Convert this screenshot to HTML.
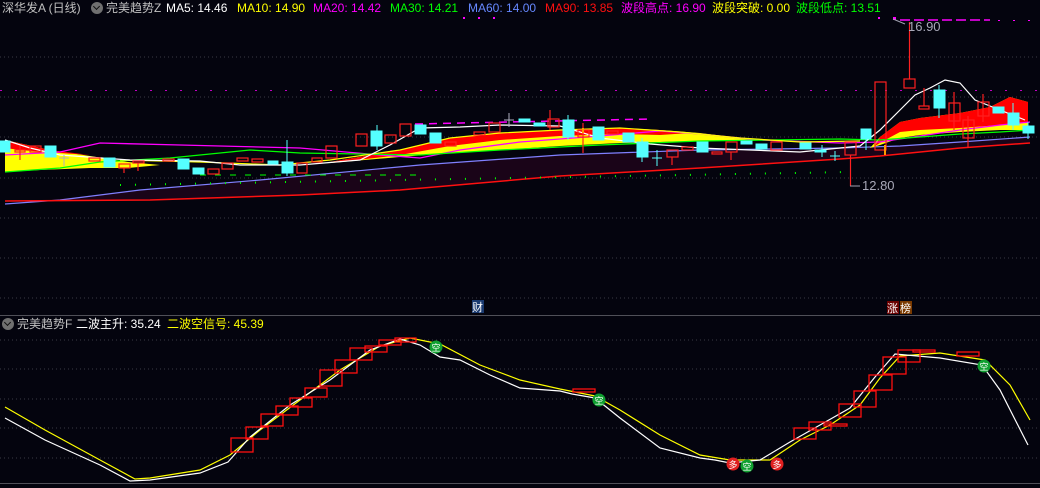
<!DOCTYPE html>
<html><head><meta charset="utf-8"><style>
html,body{margin:0;padding:0;background:#04040e;}
body{width:1040px;height:488px;overflow:hidden;position:relative;font-family:"Liberation Sans","Noto Sans CJK SC",sans-serif;}
.t{position:absolute;font-size:12px;white-space:nowrap;line-height:15px;}
.ic{position:absolute;width:12px;height:12px;border-radius:50%;background:#707070;}
.ic:after{content:"";position:absolute;left:3px;top:2px;width:4px;height:4px;border-right:1.5px solid #111;border-bottom:1.5px solid #111;transform:rotate(45deg);}
</style></head><body>
<svg width="1040" height="488" style="position:absolute;left:0;top:0" xmlns="http://www.w3.org/2000/svg">
<g stroke="#3a3a44" stroke-dasharray="1,3" stroke-width="1">
<line x1="0" y1="57" x2="1040" y2="57"/><line x1="0" y1="97" x2="1040" y2="97"/><line x1="0" y1="137" x2="1040" y2="137"/><line x1="0" y1="178" x2="1040" y2="178"/><line x1="0" y1="218" x2="1040" y2="218"/><line x1="0" y1="258" x2="1040" y2="258"/><line x1="0" y1="298" x2="1040" y2="298"/>
<line x1="0" y1="340" x2="1040" y2="340"/><line x1="0" y1="369" x2="1040" y2="369"/><line x1="0" y1="399" x2="1040" y2="399"/><line x1="0" y1="428" x2="1040" y2="428"/><line x1="0" y1="458" x2="1040" y2="458"/>
</g>
<line x1="0" y1="315.5" x2="1040" y2="315.5" stroke="#505058"/>
<line x1="0" y1="483.5" x2="1040" y2="483.5" stroke="#505058"/>
<line x1="0" y1="90.5" x2="1040" y2="90.5" stroke="#c000c0" stroke-dasharray="2,13"/>
<polygon fill="#1a0418" points="25,203 140,190 260,180 420,165 560,155 700,150 840,148 900,146 960,142 1030,137 1030,143 960,148 880,156 840,159 700,168 560,176 400,190 300,195 150,200 25,201"/>
<polyline fill="none" stroke="#8080ff" stroke-width="1.2" points="5,204 60,200 140,190 260,180 420,165 560,155 700,150 840,148 900,146 960,142 1030,137"/>
<polyline fill="none" stroke="#ff1010" stroke-width="1.5" points="5,201 150,200 300,195 400,190 560,176 700,168 840,159 880,156 960,148 1030,143"/>
<polygon fill="#ffff00" points="5,140 50,150 90,156 128,162 160,165 128,168 90,168 40,170 5,172"/>
<polygon fill="#ff0000" points="5,140 50,150 90,155 60,153 20,150 5,148"/>
<polygon fill="#ffff00" points="330,162 400,150 450,138 500,133 560,130 620,128 660,130 700,133 740,138 780,140 740,141 700,141 660,142 620,143 560,146 500,150 450,153 400,157 330,163"/>
<polygon fill="#ff0000" points="330,162 400,150 450,138 500,133 560,130 620,128 660,130 690,133 660,135 620,134 560,136 500,140 450,146 400,155 340,162"/>
<polygon fill="#ffff00" points="870,148 880,137 900,122 920,118 960,113 990,107 1010,97 1028,102 1028,130 1000,130 960,132 920,135 900,138 880,145"/>
<polygon fill="#ff0000" points="875,146 880,137 900,122 920,118 960,113 990,107 1010,97 1028,102 1028,122 1000,125 960,128 920,130 900,132 885,140"/>
<polyline fill="none" stroke="#ff00ff" stroke-width="1.3" points="5,155 60,152 100,143 180,145 300,148 380,155 420,158 460,150 520,142 600,136 660,131 700,134 760,140 840,143 880,142 920,136 960,130 1000,125 1030,122"/>
<polyline fill="none" stroke="#00ff00" stroke-width="1.3" points="5,172 60,168 100,162 170,158 250,150 300,153 420,155 500,150 600,145 700,141 840,139 880,140 920,137 960,134 1000,132 1030,130"/>
<polyline fill="none" stroke="#ffff00" stroke-width="1.2" points="120,160 200,162 280,165 330,160 400,150 450,138 500,133 560,130 620,128 680,132 740,138 800,142 860,141"/>
<polyline fill="none" stroke="#ffffff" stroke-width="1.2" points="5,140 30,148 60,155 130,160 200,161 240,165 300,165 360,160 390,145 420,128 460,127 500,125 560,126 600,138 650,144 700,148 800,152 860,146 880,130 900,110 915,95 930,88 945,80 960,83 975,100 1000,110 1025,120"/>
<polyline fill="none" stroke="#00ff00" stroke-dasharray="6,9" stroke-width="1" points="200,175 420,175"/>
<polyline fill="none" stroke="#00ff00" stroke-dasharray="1,14" stroke-width="2" points="120,185 850,172"/>
<line x1="415" y1="124" x2="650" y2="119" stroke="#ff00ff" stroke-dasharray="8,6" stroke-width="1.5"/>
<line x1="900" y1="20" x2="990" y2="20" stroke="#ff00ff" stroke-dasharray="10,4" stroke-width="1.5"/>
<g fill="#ff00ff"><rect x="463" y="17" width="2" height="2"/><rect x="478" y="17" width="2" height="2"/><rect x="493" y="17" width="2" height="2"/><rect x="878" y="17" width="2" height="2"/><rect x="893" y="17" width="3" height="3"/><rect x="998" y="20" width="2" height="1"/><rect x="1013" y="20" width="2" height="1"/><rect x="1028" y="20" width="2" height="1"/></g>
<g fill="#55ffff" stroke="#55ffff">
<rect x="0" y="141" width="10" height="11"/><rect x="45" y="146" width="11" height="11"/><rect x="104" y="158" width="11" height="9"/><rect x="178" y="159" width="11" height="10"/><rect x="193" y="168" width="11" height="6"/><rect x="268" y="161" width="10" height="3"/><rect x="282" y="162" width="11" height="11"/><rect x="371" y="131" width="11" height="15"/><rect x="415" y="125" width="11" height="9"/><rect x="430" y="133" width="11" height="10"/><rect x="519" y="119" width="11" height="3"/><rect x="534" y="123" width="11" height="3"/><rect x="563" y="120" width="11" height="17"/><rect x="593" y="127" width="11" height="13"/><rect x="623" y="133" width="11" height="9"/><rect x="637" y="142" width="11" height="15"/><rect x="697" y="142" width="11" height="10"/><rect x="741" y="141" width="11" height="3"/><rect x="756" y="144" width="11" height="5"/><rect x="800" y="143" width="11" height="6"/><rect x="815" y="150" width="11" height="2"/><rect x="861" y="129" width="10" height="10"/><rect x="934" y="90" width="11" height="18"/><rect x="993" y="107" width="11" height="6"/><rect x="1008" y="113" width="11" height="12"/><rect x="1023" y="126" width="11" height="7"/>
<line x1="287" y1="140" x2="287" y2="176"/><line x1="377" y1="125" x2="377" y2="150"/><line x1="568" y1="115" x2="568" y2="140"/><line x1="642" y1="138" x2="642" y2="162"/><line x1="866" y1="139" x2="866" y2="150"/><line x1="939" y1="85" x2="939" y2="118"/><line x1="1013" y1="103" x2="1013" y2="130"/><line x1="1028" y1="122" x2="1028" y2="139"/>
<line x1="657" y1="150" x2="657" y2="166"/><line x1="652" y1="158" x2="662" y2="158"/><line x1="822" y1="145" x2="822" y2="157"/><line x1="835" y1="151" x2="835" y2="161"/><line x1="830" y1="156" x2="840" y2="156"/>
</g>
<g fill="none" stroke="#b0b0c0"><line x1="64" y1="155" x2="64" y2="166"/><line x1="59" y1="158" x2="69" y2="158"/><line x1="509" y1="113" x2="509" y2="127"/><line x1="504" y1="120" x2="514" y2="120"/></g>
<g fill="none" stroke="#ff2020" stroke-width="1.2">
<rect x="15" y="150" width="10" height="2"/><rect x="30" y="146" width="11" height="6"/><rect x="89" y="158" width="11" height="3"/><rect x="119" y="164" width="11" height="4"/><rect x="133" y="161" width="11" height="2"/><rect x="163" y="159" width="11" height="2"/><rect x="208" y="169" width="11" height="5"/><rect x="222" y="163" width="11" height="6"/><rect x="237" y="158" width="11" height="3"/><rect x="252" y="159" width="11" height="3"/><rect x="297" y="163" width="10" height="10"/><rect x="312" y="158" width="10" height="4"/><rect x="326" y="146" width="11" height="12"/><rect x="356" y="134" width="11" height="12"/><rect x="385" y="135" width="11" height="8"/><rect x="400" y="124" width="11" height="12"/><rect x="445" y="142" width="11" height="4"/><rect x="474" y="132" width="11" height="3"/><rect x="489" y="123" width="11" height="9"/><rect x="548" y="119" width="11" height="8"/><rect x="578" y="130" width="11" height="7"/><rect x="607" y="131" width="11" height="3"/><rect x="667" y="150" width="11" height="7"/><rect x="682" y="147" width="11" height="3"/><rect x="712" y="152" width="10" height="2"/><rect x="726" y="142" width="11" height="10"/><rect x="771" y="142" width="11" height="8"/>
<rect x="845" y="142" width="11" height="13"/><rect x="875" y="82" width="11" height="68"/><rect x="904" y="79" width="11" height="9"/><rect x="919" y="106" width="10" height="3"/><rect x="949" y="103" width="11" height="18"/><rect x="963" y="120" width="11" height="18"/><rect x="978" y="102" width="11" height="14"/>
<line x1="20" y1="146" x2="20" y2="160"/><line x1="124" y1="168" x2="124" y2="173"/><line x1="138" y1="163" x2="138" y2="171"/><line x1="550" y1="110" x2="550" y2="130"/><line x1="583" y1="123" x2="583" y2="153"/><line x1="672" y1="157" x2="672" y2="165"/><line x1="731" y1="152" x2="731" y2="160"/>
<line x1="850.5" y1="155" x2="850.5" y2="186"/><line x1="909.5" y1="22" x2="909.5" y2="79"/><line x1="924" y1="88" x2="924" y2="106"/><line x1="954" y1="92" x2="954" y2="130"/><line x1="968" y1="116" x2="968" y2="148"/><line x1="983" y1="94" x2="983" y2="122"/>
</g>
<g stroke="#ff9900" stroke-width="2"><line x1="583" y1="128" x2="583" y2="133"/><line x1="885" y1="145" x2="885" y2="155"/></g>
<g stroke="#a0a0b0" fill="none"><line x1="893" y1="19" x2="905" y2="24"/><line x1="850" y1="186" x2="860" y2="186"/></g>
<text x="908" y="31" fill="#a8a8b8" font-size="13" font-family="Liberation Sans,sans-serif">16.90</text>
<text x="862" y="190" fill="#a8a8b8" font-size="13" font-family="Liberation Sans,sans-serif">12.80</text>
<rect x="472" y="300" width="12" height="13" fill="#1a3a70"/><text x="472" y="311" fill="#fff" font-size="11" font-family="Noto Sans CJK SC,sans-serif">财</text>
<rect x="887" y="301" width="12" height="13" fill="#6a0000"/><text x="887" y="312" fill="#fff" font-size="11" font-family="Noto Sans CJK SC,sans-serif">涨</text>
<rect x="900" y="301" width="12" height="13" fill="#7a3a00"/><text x="900" y="312" fill="#fff" font-size="11" font-family="Noto Sans CJK SC,sans-serif">榜</text>
<polyline fill="none" stroke="#ffff00" stroke-width="1.2" points="5,407 45,430 100,460 135,479 150,478 200,470 230,455 260,430 300,400 340,370 380,346 410,338 440,344 480,365 520,380 560,389 595,396 620,410 660,435 700,455 730,460 770,460 800,440 830,425 860,405 880,378 900,356 940,353 985,360 1010,385 1030,420"/>
<polyline fill="none" stroke="#ffffff" stroke-width="1.2" points="5,418 45,440 100,465 130,481 150,480 200,473 228,462 250,437 290,405 330,380 370,350 400,339 420,345 440,357 460,360 490,375 520,388 560,391 572,394 595,398 620,418 660,448 700,458 715,460 730,463 760,460 790,442 820,425 850,408 875,377 895,354 940,358 982,365 1000,390 1028,445"/>
<g fill="none" stroke="#ff1010" stroke-width="1.3">
<rect x="231" y="438" width="22" height="14"/><rect x="246" y="427" width="22" height="12"/><rect x="261" y="414" width="22" height="12"/><rect x="276" y="406" width="22" height="9"/><rect x="290" y="398" width="22" height="9"/><rect x="305" y="388" width="22" height="9"/><rect x="320" y="370" width="22" height="16"/><rect x="335" y="360" width="22" height="13"/><rect x="350" y="348" width="22" height="12"/><rect x="365" y="346" width="22" height="6"/><rect x="379" y="340" width="22" height="5"/><rect x="395" y="338" width="21" height="4"/><rect x="573" y="389" width="22" height="3"/>
<rect x="794" y="428" width="22" height="11"/><rect x="809" y="422" width="22" height="8"/><rect x="824" y="424" width="23" height="2"/><rect x="839" y="404" width="22" height="13"/><rect x="854" y="391" width="22" height="16"/><rect x="869" y="375" width="23" height="15"/><rect x="883" y="357" width="23" height="17"/><rect x="898" y="350" width="22" height="12"/><rect x="913" y="350" width="22" height="2"/><rect x="957" y="352" width="22" height="4"/>
</g>
<g font-size="9" font-family="Noto Sans CJK SC,sans-serif" text-anchor="middle">
<circle cx="436" cy="347" r="6.5" fill="#10a030"/><text x="436" y="351" fill="#fff">空</text>
<circle cx="599" cy="400" r="6.5" fill="#10a030"/><text x="599" y="404" fill="#fff">空</text>
<circle cx="733" cy="464" r="6.5" fill="#e02020"/><text x="733" y="468" fill="#fff">多</text>
<circle cx="747" cy="466" r="6.5" fill="#10a030"/><text x="747" y="470" fill="#fff">空</text>
<circle cx="777" cy="464" r="6.5" fill="#e02020"/><text x="777" y="468" fill="#fff">多</text>
<circle cx="984" cy="366" r="6.5" fill="#10a030"/><text x="984" y="370" fill="#fff">空</text>
</g>
</svg>
<div class="t" style="left:2px;top:1px;color:#c0c0c0">深华发A (日线)</div>
<div class="ic" style="left:91px;top:2px"></div>
<div class="t" style="left:106px;top:1px;color:#c0c0c0">完美趋势Z</div>
<div class="t" style="left:166px;top:1px;color:#ffffff">MA5: 14.46</div>
<div class="t" style="left:237px;top:1px;color:#ffff00">MA10: 14.90</div>
<div class="t" style="left:313px;top:1px;color:#ff00ff">MA20: 14.42</div>
<div class="t" style="left:390px;top:1px;color:#00ff00">MA30: 14.21</div>
<div class="t" style="left:468px;top:1px;color:#6688ff">MA60: 14.00</div>
<div class="t" style="left:545px;top:1px;color:#ff1010">MA90: 13.85</div>
<div class="t" style="left:621px;top:1px;color:#ff00ff">波段高点: 16.90</div>
<div class="t" style="left:712px;top:1px;color:#ffff00">波段突破: 0.00</div>
<div class="t" style="left:796px;top:1px;color:#00ff00">波段低点: 13.51</div>
<div class="ic" style="left:2px;top:318px"></div>
<div class="t" style="left:17px;top:317px;color:#c0c0c0">完美趋势F</div>
<div class="t" style="left:76px;top:317px;color:#ffffff">二波主升: 35.24</div>
<div class="t" style="left:167px;top:317px;color:#ffff00">二波空信号: 45.39</div>
</body></html>
